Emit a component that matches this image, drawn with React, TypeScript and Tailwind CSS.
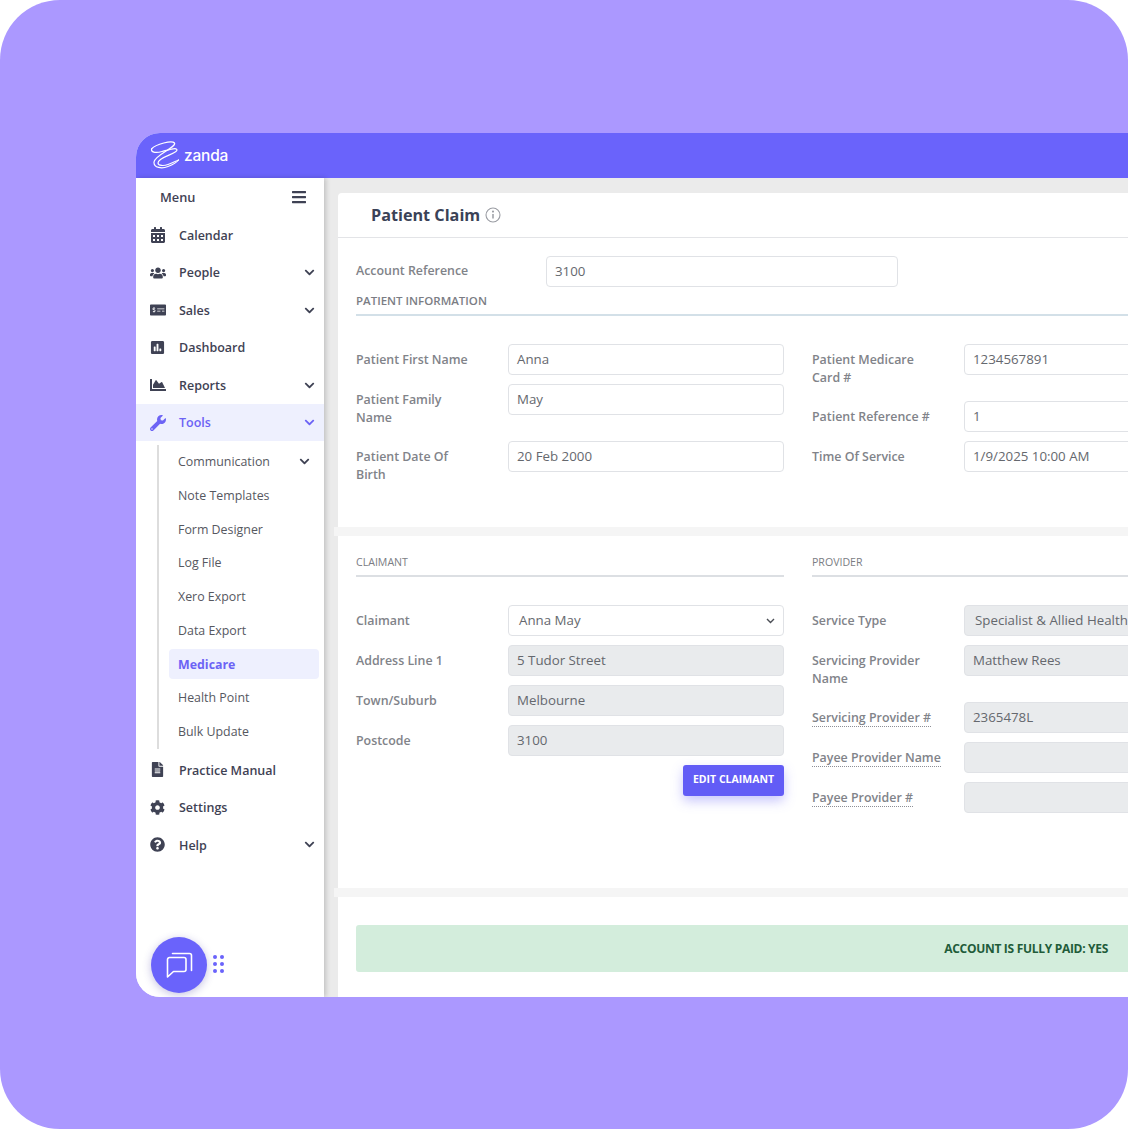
import {
  FaBars,
  FaCalendarAlt,
  FaChartArea,
  FaChevronDown,
  FaCog,
  FaFileAlt,
  FaMoneyCheckAlt,
  FaPoll,
  FaQuestionCircle,
  FaUsers,
  FaWrench,
} from "react-icons/fa";
import type { ReactNode } from "react";

const font = "font-['Open_Sans',sans-serif]";

const NavItem = ({
  icon,
  label,
  arrow,
  active,
}: {
  icon: ReactNode;
  label: string;
  arrow?: boolean;
  active?: boolean;
}) => (
  <div
    className={`flex h-[37.5px] items-center pl-[14px] pr-[9px] text-[12.5px] font-semibold ${
      active ? "bg-[#eef0fe] text-[#6c63f5]" : "text-[#3f4254]"
    }`}
  >
    <span className="flex w-[29px] shrink-0 items-center">{icon}</span>
    <span className="grow pt-[2px]">{label}</span>
    {arrow && <FaChevronDown size={11} />}
  </div>
);

const SubItem = ({ label, arrow, active }: { label: string; arrow?: boolean; active?: boolean }) => (
  <div className="flex h-[33.75px] items-center">
    <div
      className={`flex h-[30px] w-full items-center justify-between rounded-[4px] px-[9px] text-[12.4px] ${
        active ? "bg-[#eef0fe] font-bold text-[#6c63f5]" : "text-[#56585f]"
      }`}
    >
      <span className="pt-[1.5px]">{label}</span>
      {arrow && <FaChevronDown size={11} className="text-[#3f4254]" />}
    </div>
  </div>
);

const Field = ({
  label,
  value,
  disabled,
  dotted,
  select,
  roomy,
}: {
  label: string;
  value: string;
  disabled?: boolean;
  dotted?: boolean;
  select?: boolean;
  roomy?: boolean;
}) => (
  <div className="mb-[9px] flex items-start">
    <div className="w-[152px] shrink-0 pb-[5px] pr-[30px] pt-[7px] text-[12.4px] font-semibold leading-[18px] text-[#818389]">
      <span className={dotted ? "whitespace-nowrap border-b border-dotted border-[#8d8f96]" : ""}>{label}</span>
    </div>
    <div
      className={`flex h-[31px] w-[276px] shrink-0 items-center whitespace-nowrap rounded-[4px] border border-[#e0e2e6] pr-[8px] text-[13.3px] text-[#65686e] ${
        select || roomy ? "pl-[10px]" : "pl-[8px]"
      } ${disabled ? "bg-[#e9ebed]" : "bg-white"}`}
    >
      <span className="grow">{value}</span>
      {select && (
        <svg width="9" height="6" viewBox="0 0 9 6" fill="none" stroke="#4b4e55" strokeWidth="1.4">
          <path d="M1 1l3.5 3.5L8 1" />
        </svg>
      )}
    </div>
  </div>
);

const SectionTitle = ({ title }: { title: string }) => (
  <div className="h-[21px] border-b-2 border-[#dcdfe3] text-[10.6px] font-medium leading-[12px] text-[#7b7d84]">
    {title}
  </div>
);

const App = () => (
  <div className={`h-[1129px] w-[1128px] bg-white ${font}`}>
    <div className="h-full w-full overflow-hidden rounded-[60px] bg-[#ab98ff] pl-[136px] pt-[133px]">
      <div className="relative h-[864px] w-[992px] overflow-hidden rounded-l-[24px] bg-white">
        <header className="flex h-[45px] items-center bg-[#6a63fb] pl-[14px]">
          <svg width="30" height="30" viewBox="0 0 30 30" fill="none" stroke="white" strokeWidth="1.2" strokeLinecap="round">
            <path d="M1.5 8C6 3 22 -1 24.5 2C27 6 5 14 4 21C3.5 27 12 28 18 25.5C22 24 27 21 28.5 19" />
            <path d="M1.5 8C1 12 7 12 12 10.5C18 9 27 6 27 9C27 13 8 16 8 22C8 25 14 25 18 23.5C22 22 25 20.5 28.5 19" />
          </svg>
          <span className="ml-[4px] font-['Inter',sans-serif] text-[15.5px] font-medium tracking-[-0.2px] text-white">
            zanda
          </span>
        </header>
        <div className="flex h-[819px]">
          <aside className="z-10 w-[188px] shrink-0 bg-white shadow-[2px_0_5px_rgba(0,0,0,0.18)]">
            <div className="flex h-[38.25px] items-center justify-between pl-[24px] pr-[17px] text-[12.8px] font-semibold text-[#3f4254]">
              <span className="pt-[1px]">Menu</span>
              <FaBars size={16} />
            </div>
            <NavItem icon={<FaCalendarAlt size={16} />} label="Calendar" />
            <NavItem icon={<FaUsers size={16} />} label="People" arrow />
            <NavItem icon={<FaMoneyCheckAlt size={16} />} label="Sales" arrow />
            <NavItem icon={<FaPoll size={15} />} label="Dashboard" />
            <NavItem icon={<FaChartArea size={16} />} label="Reports" arrow />
            <NavItem icon={<FaWrench size={16} />} label="Tools" arrow active />
            <div className="mb-[6px] ml-[21px] mr-[5px] mt-[7px] border-l-2 border-[#dddddd] pl-[10px]">
              <div className="-my-[3.4px]">
                <SubItem label="Communication" arrow />
                <SubItem label="Note Templates" />
                <SubItem label="Form Designer" />
                <SubItem label="Log File" />
                <SubItem label="Xero Export" />
                <SubItem label="Data Export" />
                <SubItem label="Medicare" active />
                <SubItem label="Health Point" />
                <SubItem label="Bulk Update" />
              </div>
            </div>
            <NavItem icon={<FaFileAlt size={15} />} label="Practice Manual" />
            <NavItem icon={<FaCog size={15} />} label="Settings" />
            <NavItem icon={<FaQuestionCircle size={15} />} label="Help" arrow />
          </aside>
          <main className="w-[804px] overflow-hidden bg-[#ebebeb] pl-[14px] pt-[15px]">
            <section className="h-[334px] rounded-tl-[4px] bg-white">
              <div className="flex h-[45px] items-center border-b border-[#e3e4e7] pl-[33px]">
                <h1 className="text-[16.2px] font-bold text-[#3a4257]">Patient Claim</h1>
                <svg className="ml-[5px]" width="16" height="16" viewBox="0 0 16 16" fill="none" stroke="#9a9ca3" strokeWidth="1.1">
                  <circle cx="8" cy="8" r="7" />
                  <path d="M8 7v4.5" strokeWidth="1.5" />
                  <circle cx="8" cy="4.6" r="0.5" />
                </svg>
              </div>
              <div className="pl-[18px]">
                <div className="mt-[18px] flex h-[31px] items-center">
                  <div className="w-[190px] text-[12.4px] font-semibold text-[#818389]">Account Reference</div>
                  <div className="flex h-[31px] w-[352px] items-center rounded-[4px] border border-[#e0e2e6] pl-[8px] text-[13.3px] text-[#65686e]">
                    3100
                  </div>
                </div>
                <div className="mt-[6px] h-[23px] border-b-2 border-[#d3e0e8] text-[11.5px] font-semibold leading-[16px] text-[#7b7d84]">
                  PATIENT INFORMATION
                </div>
                <div className="mt-[28px] flex gap-[28px]">
                  <div className="w-[428px] shrink-0">
                    <Field label="Patient First Name" value="Anna" />
                    <Field label="Patient Family Name" value="May" />
                    <Field label="Patient Date Of Birth" value="20 Feb 2000" />
                  </div>
                  <div className="w-[428px] shrink-0">
                    <Field label="Patient Medicare Card #" value="1234567891" />
                    <Field label="Patient Reference #" value="1" />
                    <Field label="Time Of Service" value="1/9/2025 10:00 AM" />
                  </div>
                </div>
              </div>
            </section>
            <div className="-ml-[4px] h-[9px] bg-[#f5f5f5]" />
            <section className="h-[352px] bg-white pl-[18px] pt-[20px]">
              <div className="flex gap-[28px]">
                <div className="w-[428px] shrink-0">
                  <SectionTitle title="CLAIMANT" />
                  <div className="mt-[28px]">
                    <Field label="Claimant" value="Anna May" select />
                    <Field label="Address Line 1" value="5 Tudor Street" disabled />
                    <Field label="Town/Suburb" value="Melbourne" disabled />
                    <Field label="Postcode" value="3100" disabled />
                  </div>
                  <div className="flex justify-end">
                    <button className="h-[31px] w-[101px] rounded-[3px] bg-[#625cf6] pb-[1px] text-[10.5px] font-bold text-white shadow-[0_5px_12px_rgba(98,92,246,0.35)]">
                      EDIT CLAIMANT
                    </button>
                  </div>
                </div>
                <div className="w-[428px] shrink-0">
                  <SectionTitle title="PROVIDER" />
                  <div className="mt-[28px]">
                    <Field label="Service Type" value="Specialist & Allied Health" disabled roomy />
                    <Field label="Servicing Provider Name" value="Matthew Rees" disabled />
                    <Field label="Servicing Provider #" value="2365478L" disabled dotted />
                    <Field label="Payee Provider Name" value="" disabled dotted />
                    <Field label="Payee Provider #" value="" disabled dotted />
                  </div>
                </div>
              </div>
            </section>
            <div className="-ml-[4px] h-[9px] bg-[#f5f5f5]" />
            <section className="h-[100px] bg-white pl-[18px] pt-[28px]">
              <div className="flex h-[47px] items-center justify-end rounded-l-[3px] bg-[#d3eddc] pr-[20px] pt-[1px] text-[12px] font-bold tracking-[-0.3px] text-[#1f5c3a]">
                ACCOUNT IS FULLY PAID: YES
              </div>
            </section>
          </main>
        </div>
        <button className="absolute bottom-[4px] left-[15px] z-20 flex h-[56px] w-[56px] items-center justify-center rounded-full bg-[#6a63fb] shadow-[0_2px_8px_rgba(60,50,160,0.3)]">
          <svg width="27" height="27" viewBox="0 0 27 27" fill="none" stroke="white" strokeWidth="1.6" strokeLinejoin="round" strokeLinecap="round">
            <path d="M1.5 7.5a2 2 0 0 1 2-2h14.5a2 2 0 0 1 2 2v10a2 2 0 0 1-2 2H7.5L1.5 25z" />
            <path d="M6.5 1.5h17a2 2 0 0 1 2 2v15" />
          </svg>
        </button>
        <div className="absolute bottom-[24px] left-[77px] z-20 grid grid-cols-2 gap-x-[3.7px] gap-y-[3.5px]">
          {[0, 1, 2, 3, 4, 5].map((n) => (
            <span key={n} className="h-[3.6px] w-[3.6px] rounded-full bg-[#6a63fb]" />
          ))}
        </div>
      </div>
    </div>
  </div>
);

export default App;
